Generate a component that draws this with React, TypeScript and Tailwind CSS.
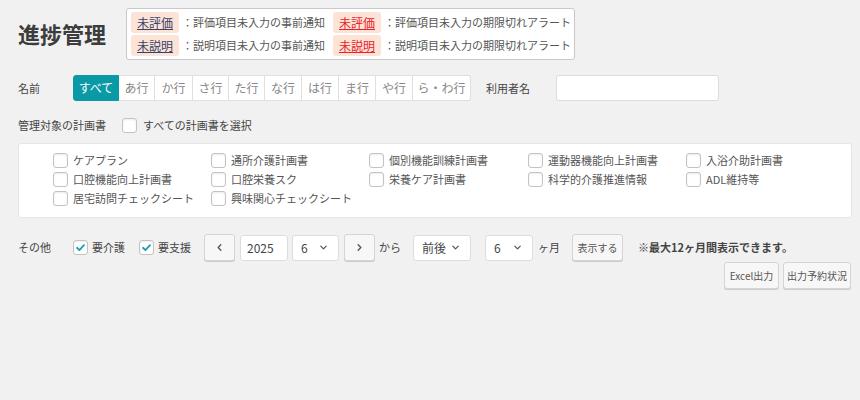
import React from 'react';

const FONT = { fontFamily: '"Noto Sans CJK JP", "Noto Sans", sans-serif' };

const kanaTabs: { label: string; w: string }[] = [
  { label: 'すべて', w: 'w-[46px]' },
  { label: 'あ行', w: 'w-[36px]' },
  { label: 'か行', w: 'w-[38px]' },
  { label: 'さ行', w: 'w-[36px]' },
  { label: 'た行', w: 'w-[36px]' },
  { label: 'な行', w: 'w-[37px]' },
  { label: 'は行', w: 'w-[37px]' },
  { label: 'ま行', w: 'w-[37px]' },
  { label: 'や行', w: 'w-[37px]' },
  { label: 'ら・わ行', w: 'w-[58px]' },
];

const plans = [
  'ケアプラン', '通所介護計画書', '個別機能訓練計画書', '運動器機能向上計画書', '入浴介助計画書',
  '口腔機能向上計画書', '口腔栄養スク', '栄養ケア計画書', '科学的介護推進情報', 'ADL維持等',
  '居宅訪問チェックシート', '興味関心チェックシート',
];

const Box: React.FC<{ checked?: boolean }> = ({ checked }) => (
  <span className="w-[15px] h-[15px] shrink-0 rounded-[3px] border border-[#c3c3c3] bg-white shadow-[inset_0_1px_2px_rgba(0,0,0,0.08)] flex items-center justify-center">
    {checked && (
      <svg width="11" height="11" viewBox="0 0 12 12">
        <path d="M2.2 6.3 L4.8 8.8 L9.8 3.4" fill="none" stroke="#1e9fb0" strokeWidth="2" strokeLinecap="round" strokeLinejoin="round" />
      </svg>
    )}
  </span>
);

const Chevron: React.FC = () => (
  <svg width="9" height="9" viewBox="0 0 10 10">
    <path d="M2 3.5 L5 6.5 L8 3.5" fill="none" stroke="#555" strokeWidth="1.4" strokeLinecap="round" strokeLinejoin="round" />
  </svg>
);

const Select: React.FC<{ value: string; w: string }> = ({ value, w }) => (
  <div className={`${w} h-[26px] bg-white border border-[#ddd] rounded-[3px] flex items-center justify-between pl-[8px] pr-[10px] text-[12px] text-[#444]`}>
    <span>{value}</span>
    <Chevron />
  </div>
);

const Btn: React.FC<{ children: React.ReactNode; w: string; cls?: string }> = ({ children, w, cls = '' }) => (
  <div className={`${w} h-[27px] bg-[#f7f7f7] border border-[#d5d5d5] rounded-[3px] shadow-[0_1px_0_#ccc] flex items-center justify-center text-[#555] ${cls}`}>
    {children}
  </div>
);

const LegendRow: React.FC<{ tag: string; text: string; red?: boolean }> = ({ tag, text, red }) => (
  <div className="flex items-center whitespace-nowrap">
    <span className={`w-[48px] h-[21px] rounded-[3px] bg-[#fde3d6] flex items-center justify-center underline text-[12px] ${red ? 'text-[#e8212a]' : 'text-[#33416b]'}`}>
      {tag}
    </span>
    <span className="ml-[3px] text-[#555]">：{text}</span>
  </div>
);

const App: React.FC = () => {
  return (
    <div className="w-[860px] h-[400px] bg-[#f1f1f1] text-[11px] leading-none text-[#444] overflow-hidden" style={FONT}>
      <div className="flex items-start pt-[8px] pl-[18px]">
        <h1 className="text-[22px] font-bold text-[#3c3c3c] mt-[14px] w-[108px] leading-none">進捗管理</h1>
        <div className="bg-white border border-[#c8c8c8] rounded-[3px] px-[4px] py-[3px] flex flex-col gap-[2px] pr-[3px]">
          <div className="flex">
            <div className="w-[202px]"><LegendRow tag="未評価" text="評価項目未入力の事前通知" /></div>
            <LegendRow tag="未評価" text="評価項目未入力の期限切れアラート" red />
          </div>
          <div className="flex">
            <div className="w-[202px]"><LegendRow tag="未説明" text="説明項目未入力の事前通知" /></div>
            <LegendRow tag="未説明" text="説明項目未入力の期限切れアラート" red />
          </div>
        </div>
      </div>

      <div className="flex items-center h-[26px] mt-[15px] pl-[18px]">
        <span className="w-[55px]">名前</span>
        <div className="flex h-[26px] text-[12px]">
          {kanaTabs.map((t, i) => (
            <div
              key={t.label}
              className={`${t.w} h-full flex items-center justify-center border ${
                i === 0
                  ? 'bg-[#0a9aa6] border-[#0a9aa6] text-white rounded-l-[3px]'
                  : 'bg-white border-[#e0e0e0] border-l-0 text-[#888]'
              } ${i === kanaTabs.length - 1 ? 'rounded-r-[3px]' : ''}`}
            >
              {t.label}
            </div>
          ))}
        </div>
        <span className="ml-[15px] w-[70px]">利用者名</span>
        <div className="w-[163px] h-[26px] bg-white border border-[#ddd] rounded-[3px]" />
      </div>

      <div className="flex items-center h-[16px] mt-[16px] pl-[18px]">
        <span className="w-[104px]">管理対象の計画書</span>
        <Box />
        <span className="ml-[6px]">すべての計画書を選択</span>
      </div>

      <div className="ml-[18px] mr-[8px] mt-[10px] bg-white border border-[#e6e6e6] rounded-[3px] pl-[34px] pt-[7px] pb-[9px] grid grid-cols-[158px_158px_159px_158px_158px]">
        {plans.map(p => (
          <label key={p} className="flex items-center h-[19px] text-[#555]">
            <Box />
            <span className="ml-[5px]">{p}</span>
          </label>
        ))}
      </div>

      <div className="flex items-center h-[27px] mt-[16px] pl-[18px]">
        <span className="w-[55px]">その他</span>
        <Box checked />
        <span className="ml-[4px]">要介護</span>
        <span className="ml-[14px]"><Box checked /></span>
        <span className="ml-[4px]">要支援</span>
        <Btn w="w-[31px]" cls="ml-[13px]">
          <svg width="9" height="9" viewBox="0 0 10 10"><path d="M6.5 2 L3.5 5 L6.5 8" fill="none" stroke="#555" strokeWidth="1.5" strokeLinecap="round" strokeLinejoin="round" /></svg>
        </Btn>
        <div className="ml-[5px] w-[48px] h-[26px] bg-white border border-[#ddd] rounded-[3px] flex items-center pl-[6px] text-[12px] text-[#444]">2025</div>
        <div className="ml-[4px]"><Select value="6" w="w-[47px]" /></div>
        <Btn w="w-[31px]" cls="ml-[5px]">
          <svg width="9" height="9" viewBox="0 0 10 10"><path d="M3.5 2 L6.5 5 L3.5 8" fill="none" stroke="#555" strokeWidth="1.5" strokeLinecap="round" strokeLinejoin="round" /></svg>
        </Btn>
        <span className="ml-[4px]">から</span>
        <div className="ml-[12px]"><Select value="前後" w="w-[58px]" /></div>
        <div className="ml-[14px]"><Select value="6" w="w-[48px]" /></div>
        <span className="ml-[5px]">ヶ月</span>
        <Btn w="w-[51px]" cls="ml-[12px] text-[10px]">表示する</Btn>
        <span className="ml-[15px] font-bold text-[#444]">※最大12ヶ月間表示できます。</span>
      </div>

      <div className="flex justify-end gap-[4px] pr-[9px] mt-[1px]">
        <Btn w="w-[55px]" cls="text-[10px]">Excel出力</Btn>
        <Btn w="w-[68px]" cls="text-[10px]">出力予約状況</Btn>
      </div>
    </div>
  );
};

export default App;
